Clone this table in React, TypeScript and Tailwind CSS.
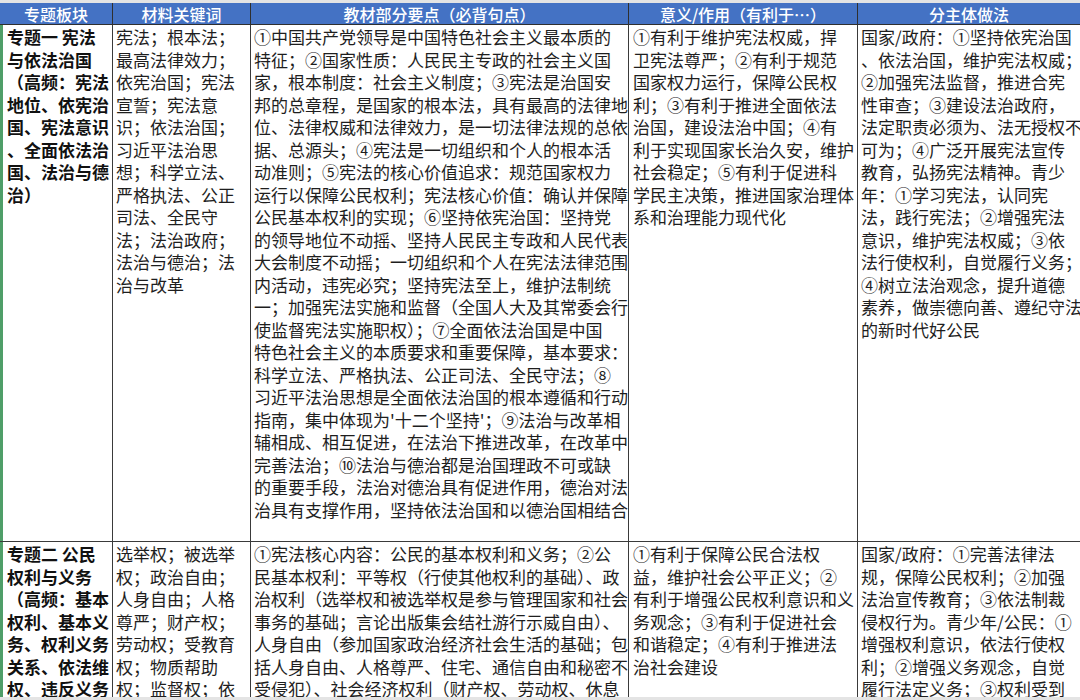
import React from 'react';

// each cell is written as its visual lines, so wrapping matches the sheet
type Row = {
  topic: string[];
  keywords: string[];
  points: string[];
  meaning: string[];
  actions: string[];
  height: string;
};

const headers = ['专题板块', '材料关键词', '教材部分要点（必背句点）', '意义/作用（有利于…）', '分主体做法'];

const rows: Row[] = [
  {
    height: 'h-[517px]',
    topic: ['专题一 宪法', '与依法治国', '（高频：宪法', '地位、依宪治', '国、宪法意识', '、全面依法治', '国、法治与德', '治）'],
    keywords: [
      '宪法；根本法；',
      '最高法律效力；',
      '依宪治国；宪法',
      '宣誓；宪法意',
      '识；依法治国；',
      '习近平法治思',
      '想；科学立法、',
      '严格执法、公正',
      '司法、全民守',
      '法；法治政府；',
      '法治与德治；法',
      '治与改革',
    ],
    points: [
      '①中国共产党领导是中国特色社会主义最本质的',
      '特征；②国家性质：人民民主专政的社会主义国',
      '家，根本制度：社会主义制度；③宪法是治国安',
      '邦的总章程，是国家的根本法，具有最高的法律地',
      '位、法律权威和法律效力，是一切法律法规的总依',
      '据、总源头；④宪法是一切组织和个人的根本活',
      '动准则；⑤宪法的核心价值追求：规范国家权力',
      '运行以保障公民权利；宪法核心价值：确认并保障',
      '公民基本权利的实现；⑥坚持依宪治国：坚持党',
      '的领导地位不动摇、坚持人民民主专政和人民代表',
      '大会制度不动摇；一切组织和个人在宪法法律范围',
      '内活动，违宪必究；坚持宪法至上，维护法制统',
      '一；加强宪法实施和监督（全国人大及其常委会行',
      '使监督宪法实施职权）；⑦全面依法治国是中国',
      '特色社会主义的本质要求和重要保障，基本要求：',
      '科学立法、严格执法、公正司法、全民守法；⑧',
      '习近平法治思想是全面依法治国的根本遵循和行动',
      "指南，集中体现为'十二个坚持'；⑨法治与改革相",
      '辅相成、相互促进，在法治下推进改革，在改革中',
      '完善法治；⑩法治与德治都是治国理政不可或缺',
      '的重要手段，法治对德治具有促进作用，德治对法',
      '治具有支撑作用，坚持依法治国和以德治国相结合',
    ],
    meaning: [
      '①有利于维护宪法权威，捍',
      '卫宪法尊严；②有利于规范',
      '国家权力运行，保障公民权',
      '利；③有利于推进全面依法',
      '治国，建设法治中国；④有',
      '利于实现国家长治久安，维护',
      '社会稳定；⑤有利于促进科',
      '学民主决策，推进国家治理体',
      '系和治理能力现代化',
    ],
    actions: [
      '国家/政府：①坚持依宪治国',
      '、依法治国，维护宪法权威；',
      '②加强宪法监督，推进合宪',
      '性审查；③建设法治政府，',
      '法定职责必须为、法无授权不',
      '可为；④广泛开展宪法宣传',
      '教育，弘扬宪法精神。青少',
      '年：①学习宪法，认同宪',
      '法，践行宪法；②增强宪法',
      '意识，维护宪法权威；③依',
      '法行使权利，自觉履行义务；',
      '④树立法治观念，提升道德',
      '素养，做崇德向善、遵纪守法',
      '的新时代好公民',
    ],
  },
  {
    height: 'h-[300px]',
    topic: ['专题二 公民', '权利与义务', '（高频：基本', '权利、基本义', '务、权利义务', '关系、依法维', '权、违反义务'],
    keywords: [
      '选举权；被选举',
      '权；政治自由；',
      '人身自由；人格',
      '尊严；财产权；',
      '劳动权；受教育',
      '权；物质帮助',
      '权；监督权；依',
    ],
    points: [
      '①宪法核心内容：公民的基本权利和义务；②公',
      '民基本权利：平等权（行使其他权利的基础）、政',
      '治权利（选举权和被选举权是参与管理国家和社会',
      '事务的基础；言论出版集会结社游行示威自由）、',
      '人身自由（参加国家政治经济社会生活的基础；包',
      '括人身自由、人格尊严、住宅、通信自由和秘密不',
      '受侵犯）、社会经济权利（财产权、劳动权、休息',
    ],
    meaning: [
      '①有利于保障公民合法权',
      '益，维护社会公平正义；②',
      '有利于增强公民权利意识和义',
      '务观念；③有利于促进社会',
      '和谐稳定；④有利于推进法',
      '治社会建设',
    ],
    actions: [
      '国家/政府：①完善法律法',
      '规，保障公民权利；②加强',
      '法治宣传教育；③依法制裁',
      '侵权行为。青少年/公民：①',
      '增强权利意识，依法行使权',
      '利；②增强义务观念，自觉',
      '履行法定义务；③权利受到',
    ],
  },
];

function Lines({ lines }: { lines: string[] }) {
  return (
    <>
      {lines.map((line, i) => (
        <div key={i} className="whitespace-nowrap">
          {line}
        </div>
      ))}
    </>
  );
}

export default function App() {
  return (
    <div
      className="w-[1080px] h-[700px] flex flex-col overflow-hidden bg-white text-[#1e1e1e]"
      style={{ fontFamily: '"Noto Sans CJK SC", "Noto Sans", sans-serif' }}
    >
      <div className="h-[3px] bg-[#e4e4e4] shrink-0" />

      <div className="flex-1 overflow-hidden">
        {/* Header */}
        <div className="grid grid-cols-[113px_138px_378px_229px_222px] h-[22px] bg-[#4472c4] border-b border-[#2f2f2f]">
          {headers.map((h, i) => (
            <div
              key={i}
              className={`flex items-center justify-center text-white text-[16px] leading-none font-medium whitespace-nowrap overflow-hidden ${
                i < headers.length - 1 ? 'border-r border-[#2f2f2f]' : ''
              }`}
            >
              {h}
            </div>
          ))}
        </div>

        {/* Body rows */}
        {rows.map((row, r) => (
          <div
            key={r}
            className={`grid grid-cols-[113px_138px_378px_229px_222px] border-b border-[#3a3a3a] text-[17px] leading-[22.5px] ${row.height}`}
          >
            <div className="border-l-[3px] border-l-[#4f9e68] border-r border-r-[#3a3a3a] pl-[4px] pt-[1px] font-bold text-[#111] overflow-hidden">
              <Lines lines={row.topic} />
            </div>
            <div className="border-r border-[#3a3a3a] pl-[3px] pt-[1px] overflow-hidden">
              <Lines lines={row.keywords} />
            </div>
            <div className="border-r border-[#3a3a3a] pl-[3px] pt-[1px] overflow-hidden">
              <Lines lines={row.points} />
            </div>
            <div className="border-r border-[#3a3a3a] pl-[4px] pt-[1px] overflow-hidden">
              <Lines lines={row.meaning} />
            </div>
            <div className="pl-[3px] pt-[1px] overflow-hidden">
              <Lines lines={row.actions} />
            </div>
          </div>
        ))}
      </div>

      <div className="h-[3px] bg-[#e4e4e4] shrink-0" />
    </div>
  );
}
